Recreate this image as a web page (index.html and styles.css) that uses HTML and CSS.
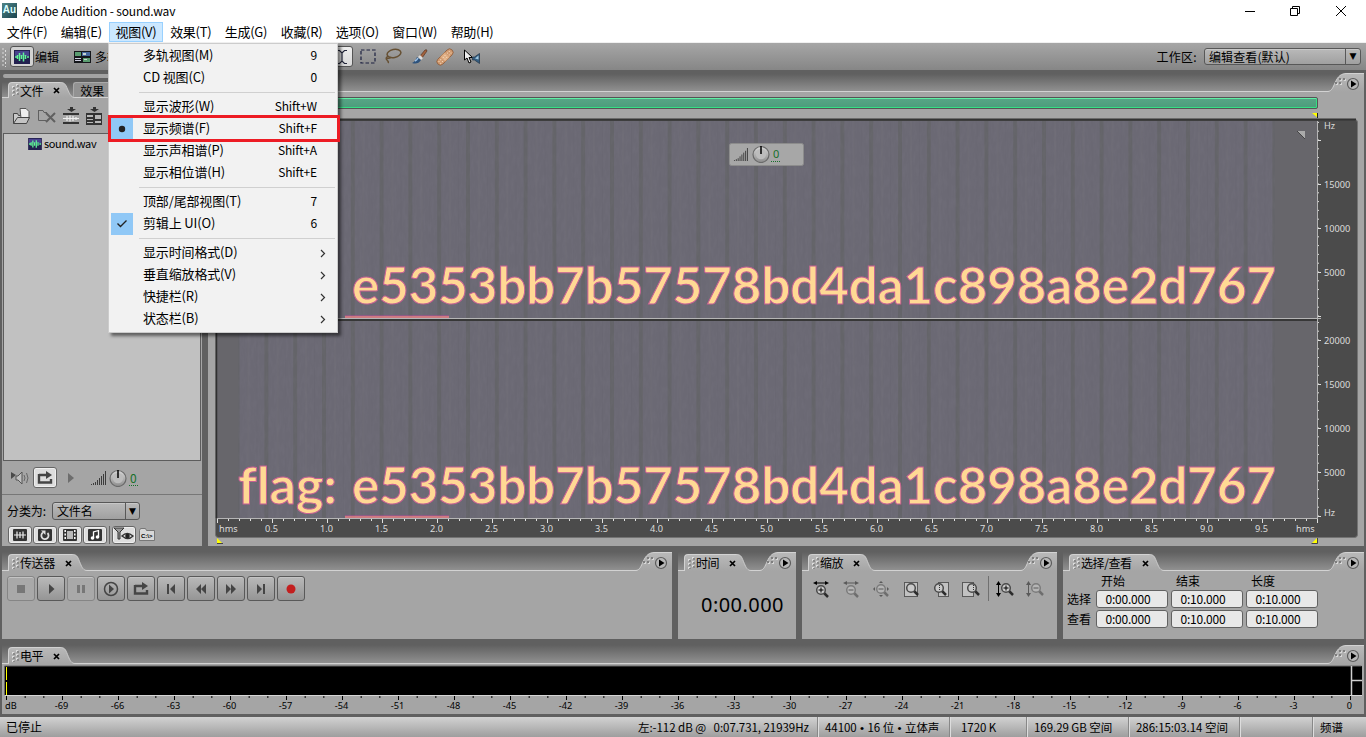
FILE: index.html
```html
<!DOCTYPE html>
<html lang="zh-CN">
<head>
<meta charset="utf-8">
<title>Adobe Audition - sound.wav</title>
<link rel="stylesheet" href="styles.css">
</head>
<body>
<svg class="defs" width="0" height="0">
  <defs>
    <linearGradient id="tabfill" x1="0" y1="0" x2="0" y2="1"><stop offset="0" stop-color="#b9b9b9"/><stop offset="1" stop-color="#a5a5a5"/></linearGradient>
    <linearGradient id="knobfill" x1="0" y1="0" x2="0" y2="1"><stop offset="0" stop-color="#d8d8d8"/><stop offset="1" stop-color="#8c8c8c"/></linearGradient>
    <symbol id="slope" viewBox="0 0 18 18" preserveAspectRatio="none"><path d="M0 0.5C7 .5 7 4 10 10C12 14.5 14 17.5 18 17.5V18H0Z" fill="url(#tabfill)"/><path d="M0 .5C7 .5 7 4 10 10C12 14.5 14 17.5 18 17.5" fill="none" stroke="#d2d2d2"/></symbol>
    <symbol id="corner" viewBox="0 0 36 19"><path d="M0 18.5C4 18 5 14 7 10C10 3 13 .5 19 .5H36V19H0Z" fill="url(#tabfill)"/><path d="M0 18.5C4 18 5 14 7 10C10 3 13 .5 19 .5H36" fill="none" stroke="#d2d2d2"/>
      <path d="M8 10h2v2H8zM12 10h2v2h-2zM12 6h2v2h-2zM16 6h2v2h-2z" fill="#d8d8d8"/><path d="M7 9h2v2H7zM11 9h2v2h-2zM11 5h2v2h-2zM15 5h2v2h-2z" fill="#7e7e7e"/>
      <circle cx="25" cy="11" r="5.500" fill="#b8b8b8" stroke="#5c5c5c" stroke-width="1.200"/><path d="M23 7.500v7l5.500-3.500z" fill="#000"/></symbol>
    <symbol id="grip" viewBox="0 0 9 13"><path d="M1 2h2v2H1zM1 6h2v2H1zM1 10h2v2H1zM5 4h2v2H5zM5 8h2v2H5zM5 0h2v2H5z" fill="#dcdcdc"/><path d="M2 3h2v2H2zM2 7h2v2H2zM2 11h2v1H2zM6 5h2v2H6zM6 9h2v2H6zM6 1h2v2H6z" fill="#8a8a8a"/></symbol>
    <symbol id="close" viewBox="0 0 7 7"><path d="M1 1l5 5M6 1L1 6" stroke="#000" stroke-width="1.700"/></symbol>
    <symbol id="wave" viewBox="0 0 16 14"><rect width="16" height="14" fill="#22204f"/><rect x="1" y="1" width="14" height="5" fill="#49428e"/><path d="M1 7h2M3.500 5v4M5.500 3v8M7.500 5v4M9.500 2.500v9M11.500 5v4M13 7h2" stroke="#61f29a" stroke-width="1.500"/></symbol>
    <symbol id="multi" viewBox="0 0 17 12"><rect width="17" height="12" fill="#14161a"/><path d="M1 1h6v4H1zM9 7h7v4H9z" fill="#5a9c70"/><path d="M8 1h8v4H8z" fill="#46679c"/><path d="M1 7h6v1H1zM1 9h6v1H1z" fill="#ccd"/><path d="M9 2h3v2H9zM10 8h3v1h-3z" fill="#c8d4d0"/></symbol>
    <symbol id="knob" viewBox="0 0 18 18"><circle cx="9" cy="9.500" r="8" fill="url(#knobfill)" stroke="#6a6a6a" stroke-width="1.200"/><circle cx="9" cy="9" r="5.200" fill="#bcbcbc"/><path d="M9 1v8" stroke="#000" stroke-width="1.500"/></symbol>
    <symbol id="bars" viewBox="0 0 16 14"><path d="M1.500 13v1M3.500 12v2M5.500 11v3M7.500 9v5M9.500 7v7M11.500 5v9M13.500 3v11M15.500 0v14" stroke="#3c3c3c"/></symbol>
    <symbol id="loop" viewBox="0 0 16 14"><path d="M2 3v8.500h12V8M2 4h8" fill="none" stroke="#454545" stroke-width="2.400"/><path d="M9 0v8l6-4z" fill="#454545"/></symbol>
    <symbol id="lens" viewBox="0 0 14 14"><path d="M8.500 8.500l4.500 4.500" stroke="#2c2c2c" stroke-width="2.500"/><circle cx="6" cy="6" r="4.300" fill="#c9c9c9" stroke="#4a4a4a" stroke-width="1.500"/></symbol>
    <symbol id="harrow" viewBox="0 0 16 5" preserveAspectRatio="none"><path d="M0 2.500L4 0v2h8V0l4 2.500L12 5V3H4v2z"/></symbol>
    <symbol id="varrow" viewBox="0 0 5 16" preserveAspectRatio="none"><path d="M2.500 0L5 4H3v8h2l-2.500 4L0 12h2V4H0z"/></symbol>
  </defs>
</svg>

<div class="app">
  <header class="titlebar">
    <span class="logo">Au</span>
    <span class="title">Adobe Audition - sound.wav</span>
    <svg class="wincontrols" width="106" height="20" fill="none" stroke="#000"><path d="M0 10.500h10"/><path d="M45.500 7.500h7v7h-7zM47.500 7V5.500h7v7H53"/><path d="M91 5l10 10M101 5L91 15"/></svg>
  </header>
  <nav class="menubar">
    <span>文件(F)</span><span>编辑(E)</span><span class="active">视图(V)</span><span>效果(T)</span><span>生成(G)</span><span>收藏(R)</span><span>选项(O)</span><span>窗口(W)</span><span>帮助(H)</span>
  </nav>

  <div class="toolbar">
    <svg width="5" height="20"><path d="M1 1v18M3.500 3v18" stroke="#dadada" stroke-dasharray="2 2"/></svg>
    <span class="modebtn"><svg width="16" height="14"><use href="#wave"/></svg></span>
    <span class="modetext">编辑</span>
    <svg class="multi" width="17" height="12"><use href="#multi"/></svg>
    <span class="modetext">多轨</span>
    <div class="tools">
      <span class="toolbtn"><svg width="12" height="16" fill="none" stroke="#22263a" stroke-width="1.200"><path d="M1 1.500h2.500L6 4l2.500-2.500H11M6 4v8M1 14.500h2.500L6 12l2.500 2.500H11"/></svg></span>
      <svg width="16" height="15"><rect x="1" y="1" width="14" height="13" fill="none" stroke="#1c2040" stroke-width="1.200" stroke-dasharray="3.500 2"/></svg>
      <svg width="18" height="17" fill="none" stroke="#665033" stroke-width="1.500"><ellipse cx="10" cy="5.500" rx="7" ry="4" transform="rotate(-12 10 5.500)"/><path d="M4 8q-3 2-1 4t1 3M3 10q3 1 4-1"/></svg>
      <svg width="17" height="16"><path d="M9 7l5-6q2-1 2 1l-5 7z" fill="#a3623d" stroke="#4a2818" stroke-width=".6"/><path d="M7 8l3 3 2-2-3-3z" fill="#ddd"/><path d="M1 14q3-1 5-6l4 3q-3 5-9 3z" fill="#2d527c"/><path d="M4 12q2-1 3-3" stroke="#9dc2e8" stroke-width="1.500"/></svg>
      <svg width="18" height="18"><g transform="rotate(-45 9 9)"><rect x="-1" y="5.500" width="20" height="7" rx="3.500" fill="#d09a70" stroke="#8b5c3c" stroke-width=".8"/><rect x="6" y="5.500" width="6" height="7" fill="#dfae84"/><path d="M1 8h4M1 10.500h4M13 8h4M13 10.500h4M7 8h4M7 10.500h4" stroke="#fbe3c7" stroke-dasharray="1 1.500"/></g></svg>
      <svg width="18" height="16"><path d="M1.500 1v10l2.500-2 2 5 2-1-2-4.500h3.500z" fill="#eee" stroke="#000"/><path d="M9.500 8h2l5-3.500v10L11.500 11h-2z" fill="#355d80" stroke="#203448" stroke-width=".7"/><path d="M12 9.500l3.500-3v4z" fill="#9dc6df"/></svg>
    </div>
    <span class="wslabel">工作区:</span>
    <span class="combo wscombo"><span>编辑查看(默认)</span><i>▼</i></span>
  </div>

  <main class="workspace">
    <section class="files">
      <div class="dockbar"></div>
      <div class="head filehead">
        <div class="tab"><svg width="9" height="13"><use href="#grip"/></svg><span>文件</span><svg class="x" width="7" height="7"><use href="#close"/></svg></div><svg class="slope" width="15" height="16"><use href="#slope"/></svg><div class="idletab">效果</div>
      </div>
      <div class="fileicons">
        <svg width="20" height="18"><path d="M1.500 16.500v-10h4l1 2h8v3" fill="#c9c9c9" stroke="#444"/><path d="M8 1.500h6l3 3v7H9z" fill="#eee" stroke="#555"/><path d="M1.500 16.500l4-6h12l-3 6z" fill="#c4c4c4" stroke="#444"/></svg>
        <svg width="20" height="18" fill="none" stroke="#606060"><path d="M1.500 3v10.500H9M1.500 3.500H6l1 2h3"/><path d="M9 6l9 9M18 6l-9 9" stroke-width="2"/></svg>
        <svg width="18" height="18"><path d="M8 0h3v2h3L9.500 5 5 2h3zM1 6h16v2H1zM1 15h16v2H1z" fill="#333"/><path d="M1 11.500h16M5 9v5M8 8.500v6M11 9v5M14 10v3" stroke="#eee" stroke-width="1.200"/></svg>
        <svg width="18" height="18"><path d="M8 0h3v2h3L9.500 5 5 2h3zM1 6h16v12H1z" fill="#333"/><path d="M2 8h6v2H2zM10 8h6v4h-6zM2 12h6v1H2zM2 15h6v1H2zM10 14h6v2h-6z" fill="#b8b8b8"/></svg>
      </div>
      <div class="filelist"><svg width="14" height="12"><use href="#wave" width="14" height="12"/></svg><span>sound.wav</span></div>
      <div class="playrow">
        <svg width="18" height="14"><path d="M0 1l5 3-5 4z" fill="#4a4a4a"/><path d="M5 5h2l4-4v12L7 9H5z" fill="#c0c0c0" stroke="#555"/><path d="M13 4q2 3 0 6M15.500 2q3 5 0 10" fill="none" stroke="#666"/></svg>
        <span class="lightbtn loopbtn"><svg width="16" height="14"><use href="#loop"/></svg></span>
        <svg class="mini" width="6" height="10"><path d="M0 0v10l6-5z" fill="#6d6d6d"/></svg>
        <svg class="vol" width="16" height="14"><use href="#bars"/></svg>
        <svg class="dial" width="18" height="18"><use href="#knob"/></svg>
        <span class="zero">0</span>
      </div>
      <div class="sortrow"><span>分类为:</span><span class="combo sortcombo"><span>文件名</span><i>▼</i></span></div>
      <div class="filterrow">
        <span class="lightbtn"><svg width="16" height="14"><rect x="1" y="1" width="14" height="12" rx="1" fill="#333"/><path d="M2 7h12M5 3.500v7M8 4v6M11 3.500v7" stroke="#eee" stroke-width="1.200"/></svg></span>
        <span class="lightbtn"><svg width="14" height="14"><rect y="1" width="14" height="12" rx="1" fill="#333"/><path d="M5 4.500a3.600 3.600 0 1 0 4.500.5" fill="none" stroke="#ddd" stroke-width="1.800"/><path d="M3 2.500h4.500V7z" fill="#ddd"/></svg></span>
        <span class="lightbtn"><svg width="14" height="14"><rect y="1" width="14" height="12" rx="1" fill="#333"/><rect x="4" y="3" width="6" height="8" fill="#b8b8b8"/><path d="M2.200 2v10M11.800 2v10" stroke="#fff" stroke-width="1.500" stroke-dasharray="2 1.500"/></svg></span>
        <span class="lightbtn"><svg width="14" height="14"><rect y="1" width="14" height="12" rx="1" fill="#333"/><path d="M5.500 10V4l5-1.500V9" fill="none" stroke="#fff" stroke-width="1.300"/><circle cx="4.500" cy="10" r="1.800" fill="#fff"/><circle cx="9.500" cy="9" r="1.800" fill="#fff"/></svg></span>
        <span class="vsep"></span>
        <span class="lightbtn"><svg width="20" height="16"><path d="M0 1h10L6 5v7H4V5z" fill="#999" stroke="#333"/><path d="M8 9q5-5 11 0-5 5-11 0z" fill="#ddd" stroke="#333" stroke-width="1.400"/><circle cx="13.500" cy="9" r="2.300" fill="#222"/></svg></span>
        <svg class="pathicon" width="17" height="14"><path d="M.5 12.500v-10l1-2h5l1 2h8v10z" fill="#d8d8d8" stroke="#777"/><text x="2" y="9.500">C:\&gt;</text></svg>
      </div>
    </section>

    <section class="editor">
      <div class="head edhead"><span class="fill"></span><svg class="corner" width="36" height="19"><use href="#corner"/></svg></div>
      <div class="rangebar"><i></i></div>
      <svg class="spectrum" width="1144" height="434" viewBox="215 112 1144 434">
        <defs>
          <pattern id="bands" x="322" y="0" width="28.800" height="300" patternUnits="userSpaceOnUse"><rect width="28.800" height="300" fill="#6b6974"/><rect x="0" width="4" height="300" fill="#646469"/><rect x="12" width="2" height="300" fill="#6d6b75"/><rect x="21" width="1" height="300" fill="#686672"/></pattern>
          <filter id="grain" x="0" y="0" width="100%" height="100%"><feTurbulence type="fractalNoise" baseFrequency=".35 .09" numOctaves="2" seed="4"/><feColorMatrix values="0 0 0 0 .46  0 0 0 0 .43  0 0 0 0 .53  .8 0 0 0 -.3"/></filter>
          <g id="channel">
            <rect x="217" width="1100" height="197" fill="#67666b"/><rect x="238" width="1037" height="197" fill="url(#bands)"/><rect x="238" width="1037" height="197" filter="url(#grain)" opacity=".12"/>
            <path d="M345 194.500h104" stroke="#b34d99" opacity=".5"/><path d="M345 196h104" stroke="#f08088" stroke-width="1.500"/>
          </g>
        </defs>
        <rect x="215.500" y="119.500" width="1142" height="418" rx="3" fill="#4b4b4b" stroke="#737373"/>
        <path d="M216 119.500h1140" stroke="#333" stroke-width="2"/>
        <use href="#channel" y="121"/><use href="#channel" y="321"/>
        <path d="M217 318.500h1104" stroke="#b5b5b5"/><path d="M217 320h1101" stroke="#303030" stroke-width="1.500"/>
        <path d="M216.500 120v398" stroke="#303030" stroke-width="1.500"/>
        <path d="M217 518.500h1101M1317.500 121v397" stroke="#b5b5b5"/>
        <g class="flag"><text x="352" y="303.500" textLength="924" lengthAdjust="spacingAndGlyphs">e5353bb7b57578bd4da1c898a8e2d767</text><text x="238" y="503.500" textLength="99" lengthAdjust="spacingAndGlyphs">flag:</text><text x="352" y="503.500" textLength="924" lengthAdjust="spacingAndGlyphs">e5353bb7b57578bd4da1c898a8e2d767</text></g>
        <g stroke="#e0e0e0"><path d="M217 520h1101" stroke-width="2" stroke-dasharray="1 10"/><path d="M217 521h1101" stroke-width="4" stroke-dasharray="1 54"/>
        <path d="M1318.500 316.500V121" stroke-dasharray="1 7.800"/><path d="M1319.500 317V121" stroke-width="3" stroke-dasharray="1 43"/><path d="M1318.500 516.500V322" stroke-dasharray="1 7.800"/><path d="M1319.500 517V322" stroke-width="3" stroke-dasharray="1 43"/></g>
        <g class="ruler">
          <text x="219" y="532">hms</text>
          <g text-anchor="middle"><text x="271.500" y="532">0.5</text><text x="326.500" y="532">1.0</text><text x="381.500" y="532">1.5</text><text x="436.500" y="532">2.0</text><text x="491.500" y="532">2.5</text><text x="546.500" y="532">3.0</text><text x="601.500" y="532">3.5</text><text x="656.500" y="532">4.0</text><text x="711.500" y="532">4.5</text><text x="766.500" y="532">5.0</text><text x="821.500" y="532">5.5</text><text x="876.500" y="532">6.0</text><text x="931.500" y="532">6.5</text><text x="986.500" y="532">7.0</text><text x="1041.500" y="532">7.5</text><text x="1096.500" y="532">8.0</text><text x="1151.500" y="532">8.5</text><text x="1206.500" y="532">9.0</text><text x="1261.500" y="532">9.5</text></g>
          <text x="1296" y="532">hms</text>
          <text x="1324" y="129">Hz</text><text x="1324" y="188">15000</text><text x="1324" y="232">10000</text><text x="1324" y="276">5000</text>
          <text x="1324" y="344">20000</text><text x="1324" y="388">15000</text><text x="1324" y="432">10000</text><text x="1324" y="476">5000</text><text x="1324" y="516">Hz</text>
        </g>
        <path d="M1312 113h6v5z" fill="#ff0"/><path d="M1317.500 113v5" stroke="#222"/>
        <path d="M217 538v5h5z" fill="#ff0"/><path d="M217 543.500h6" stroke="#444"/><path d="M1317 538v5h-5z" fill="#ff0"/><path d="M1317.500 538v5.500h-6" fill="none" stroke="#444"/>
        <path d="M1297 131h8v8z" fill="#aaa"/><path d="M1297 131l8 8" stroke="#444"/>
        <rect x="729.500" y="143.500" width="74" height="22" rx="2" fill="#a7a7a7" stroke="#8c8c8c"/>
        <use href="#bars" x="733" y="148" width="15" height="13"/><use href="#knob" x="752" y="145" width="18" height="18"/>
        <text class="gain" x="773" y="158">0</text><path d="M771 161.500h9" stroke="#17702a" stroke-dasharray="1 1"/>
      </svg>
    </section>
  </main>

  <div class="lower">
    <section class="panel transport">
      <div class="head"><div class="tab"><svg width="9" height="13"><use href="#grip"/></svg><span>传送器</span><svg class="x" width="7" height="7"><use href="#close"/></svg></div><svg class="slope" width="15" height="17"><use href="#slope"/></svg><span class="fill"></span><svg class="corner" width="36" height="19"><use href="#corner"/></svg></div>
      <div class="buttons">
        <span class="off"><svg width="20" height="16"><path d="M6 4h8v8H6z"/></svg></span>
        <span><svg width="20" height="16"><path d="M8 3v10l5.500-5z"/></svg></span>
        <span class="off"><svg width="20" height="16"><path d="M6 4h3v8H6zM11 4h3v8h-3z"/></svg></span>
        <span><svg width="20" height="16"><circle cx="10" cy="8" r="6.500" fill="none" stroke="#454545" stroke-width="1.500"/><path d="M8 3.500v9l5-4.500z"/></svg></span>
        <span><svg width="16" height="14"><use href="#loop"/></svg></span>
        <span><svg width="20" height="16"><path d="M6 3h2v10H6zM14 3v10L9 8z"/></svg></span>
        <span><svg width="20" height="16"><path d="M10 3v10L5 8zM15 3v10l-5-5z"/></svg></span>
        <span><svg width="20" height="16"><path d="M5 3v10l5-5zM10 3v10l5-5z"/></svg></span>
        <span><svg width="20" height="16"><path d="M6 3v10l5-5zM12 3h2v10h-2z"/></svg></span>
        <span><svg width="20" height="16"><circle cx="10" cy="8" r="4.500" fill="#c31f1f"/></svg></span>
      </div>
    </section>
    <section class="panel time">
      <div class="head"><div class="tab"><svg width="9" height="13"><use href="#grip"/></svg><span>时间</span><svg class="x" width="7" height="7"><use href="#close"/></svg></div><svg class="slope" width="15" height="17"><use href="#slope"/></svg><span class="fill"></span><svg class="corner" width="36" height="19"><use href="#corner"/></svg></div>
      <div class="clock">0:00.000</div>
    </section>
    <section class="panel zoom">
      <div class="head"><div class="tab"><svg width="9" height="13"><use href="#grip"/></svg><span>缩放</span><svg class="x" width="7" height="7"><use href="#close"/></svg></div><svg class="slope" width="15" height="17"><use href="#slope"/></svg><span class="fill"></span><svg class="corner" width="36" height="19"><use href="#corner"/></svg></div>
      <div class="zooms">
        <svg width="18" height="18"><use href="#harrow" x="1" y="0" width="16" height="4"/><use href="#lens" x="3" y="3" width="14" height="14"/><path d="M6.500 9h5M9 6.500v5" stroke="#000"/></svg>
        <svg class="dim" width="18" height="18"><use href="#harrow" x="1" y="0" width="16" height="4"/><use href="#lens" x="3" y="3" width="14" height="14"/><path d="M6.500 9h5" stroke="#000"/></svg>
        <svg class="dim" width="18" height="18"><path d="M9 0l2 2H7zM9 16l2-2H7zM1 8l2-2v4zM17 8l-2-2v4z"/><use href="#lens" x="3" y="2" width="14" height="14"/><path d="M6.500 8h5" stroke="#000"/></svg>
        <svg width="18" height="18"><rect x="2.500" y="1.500" width="13" height="14" fill="#c2c2c2" stroke="#000" stroke-dasharray="1 1"/><use href="#lens" x="3" y="1" width="14" height="14"/></svg>
        <svg width="18" height="18"><rect x="6.500" y="1.500" width="10" height="14" fill="#c2c2c2" stroke="#000" stroke-dasharray="1 1"/><use href="#lens" x="1" y="1" width="14" height="14"/><path d="M7.500 4v6" stroke="#333" stroke-dasharray="1 1"/></svg>
        <svg width="18" height="18"><rect x=".5" y="1.500" width="11" height="14" fill="#c2c2c2" stroke="#000" stroke-dasharray="1 1"/><use href="#lens" x="4" y="1" width="14" height="14"/><path d="M11.500 4v6" stroke="#333" stroke-dasharray="1 1"/></svg>
        <i></i>
        <svg width="18" height="18"><use href="#varrow" x="0" y="0" width="5" height="16"/><use href="#lens" x="4" y="1" width="14" height="14"/><path d="M7.500 7h5M10 4.500v5" stroke="#000"/></svg>
        <svg class="dim" width="18" height="18"><use href="#varrow" x="0" y="0" width="5" height="16"/><use href="#lens" x="4" y="1" width="14" height="14"/><path d="M7.500 7h5" stroke="#000"/></svg>
      </div>
    </section>
    <section class="panel select">
      <div class="head"><div class="tab"><svg width="9" height="13"><use href="#grip"/></svg><span>选择/查看</span><svg class="x" width="7" height="7"><use href="#close"/></svg></div><svg class="slope" width="15" height="17"><use href="#slope"/></svg><span class="fill"></span><svg class="corner" width="36" height="19"><use href="#corner"/></svg></div>
      <div class="fields">
        <span></span><span class="th">开始</span><span class="th">结束</span><span class="th">长度</span>
        <span>选择</span><b>0:00.000</b><b>0:10.000</b><b>0:10.000</b>
        <span>查看</span><b>0:00.000</b><b>0:10.000</b><b>0:10.000</b>
      </div>
    </section>
  </div>

  <section class="panel levels">
    <div class="head"><div class="tab"><svg width="9" height="13"><use href="#grip"/></svg><span>电平</span><svg class="x" width="7" height="7"><use href="#close"/></svg></div><svg class="slope" width="15" height="17"><use href="#slope"/></svg><span class="fill"></span><svg class="corner" width="36" height="19"><use href="#corner"/></svg></div>
    <svg class="meter" width="1362" height="50" viewBox="2 664 1362 50">
      <rect x="4" y="666" width="1358" height="29" fill="#000"/><path d="M4.500 695v-29h1357" fill="none" stroke="#666"/><path d="M5 695.500h1357" stroke="#d6d6d6"/>
      <path d="M6.500 667v13M6.500 682v13" stroke="#ff0"/><path d="M1351.500 666v29M1352 680.500h10" stroke="#d0d0d0" stroke-width="1.500"/>
      <path d="M6 697h1345" stroke="#000" stroke-width="2" stroke-dasharray="1 17.667"/><path d="M6 698h1345" stroke="#000" stroke-width="4" stroke-dasharray="1 55"/>
      <g class="db"><text x="5" y="709">dB</text><g text-anchor="middle"><text x="61.500" y="709">-69</text><text x="117.500" y="709">-66</text><text x="173.500" y="709">-63</text><text x="229.500" y="709">-60</text><text x="285.500" y="709">-57</text><text x="341.500" y="709">-54</text><text x="397.500" y="709">-51</text><text x="453.500" y="709">-48</text><text x="509.500" y="709">-45</text><text x="565.500" y="709">-42</text><text x="621.500" y="709">-39</text><text x="677.500" y="709">-36</text><text x="733.500" y="709">-33</text><text x="789.500" y="709">-30</text><text x="845.500" y="709">-27</text><text x="901.500" y="709">-24</text><text x="957.500" y="709">-21</text><text x="1013.500" y="709">-18</text><text x="1069.500" y="709">-15</text><text x="1125.500" y="709">-12</text><text x="1181.500" y="709">-9</text><text x="1237.500" y="709">-6</text><text x="1293.500" y="709">-3</text><text x="1349.500" y="709">0</text></g></g>
    </svg>
  </section>

  <footer class="status">
    <span class="stopped">已停止</span><span class="s1">左:-112 dB @ &nbsp; 0:07.731, 21939Hz</span><span class="s2">44100 <u>•</u> 16 位 <u>•</u> 立体声</span><span class="s3">1720 K</span><span class="s4">169.29 GB 空间</span><span class="s5">286:15:03.14 空间</span><span class="s6"></span><span class="s7">频谱</span>
  </footer>

  <div class="dropdown">
    <div class="row"><span>多轨视图(M)</span><em>9</em></div>
    <div class="row"><span>CD 视图(C)</span><em>0</em></div>
    <hr>
    <div class="row"><span>显示波形(W)</span><em>Shift+W</em></div>
    <div class="row"><i class="mark"><svg width="22" height="22"><circle cx="11" cy="11" r="3.200" fill="#222"/></svg></i><span>显示频谱(F)</span><em>Shift+F</em></div>
    <div class="row"><span>显示声相谱(P)</span><em>Shift+A</em></div>
    <div class="row"><span>显示相位谱(H)</span><em>Shift+E</em></div>
    <hr>
    <div class="row"><span>顶部/尾部视图(T)</span><em>7</em></div>
    <div class="row"><i class="mark"><svg width="22" height="22"><path d="M6.500 10.500l3 3 6-6" fill="none" stroke="#222" stroke-width="1.400"/></svg></i><span>剪辑上 UI(O)</span><em>6</em></div>
    <hr>
    <div class="row"><span>显示时间格式(D)</span><svg class="arrow" width="6" height="9"><path d="M1 1l3.500 3.500L1 8"/></svg></div>
    <div class="row"><span>垂直缩放格式(V)</span><svg class="arrow" width="6" height="9"><path d="M1 1l3.500 3.500L1 8"/></svg></div>
    <div class="row"><span>快捷栏(R)</span><svg class="arrow" width="6" height="9"><path d="M1 1l3.500 3.500L1 8"/></svg></div>
    <div class="row"><span>状态栏(B)</span><svg class="arrow" width="6" height="9"><path d="M1 1l3.500 3.500L1 8"/></svg></div>
    <div class="redbox"></div>
  </div>
</div>
</body>
</html>
```
FILE: styles.css
```css
* { box-sizing: border-box; }
body { margin: 0; overflow: hidden; color: #000; font: 12px/16px "Noto Sans CJK SC", sans-serif; }
svg { display: block; flex: none; }
i, em { font-style: normal; }
.defs { position: absolute; }
.app { position: relative; width: 1366px; height: 737px; display: flex; flex-direction: column; background: #606060; white-space: nowrap; }

.titlebar { height: 22px; background: #fff; display: flex; align-items: center; padding-left: 2px; }
.logo { width: 15px; height: 15px; margin-top: -1px; background: linear-gradient(135deg, #4f8588, #19434d); color: #dff; font: bold 10px/14px "Liberation Sans", sans-serif; text-align: center; }
.title { margin-left: 6px; font-size: 12px; line-height: 20px; letter-spacing: -.16px; }
.wincontrols { margin-left: auto; margin-right: 15px; }
.menubar { height: 21px; background: #fff; display: flex; border-bottom: 1px solid #f0f0f0; font-size: 13px; letter-spacing: -.3px; }
.menubar span { height: 20px; line-height: 18px; padding: 0 6.800px; border: 1px solid transparent; border-width: 1px 0; }
.menubar .active { background: #cce8ff; border: 1px solid #99d1ff; padding: 0 6px; }

.toolbar { height: 27px; display: flex; align-items: center; background: linear-gradient(#a6a6a6, #868686); padding: 0 5px 0 2px; }
.modebtn { width: 24px; height: 21px; margin-left: 3px; display: grid; place-items: center; border: 1px solid #555; border-radius: 3px; background: #d2d2d2; }
.modetext { margin-left: 1px; font-size: 12px; }
.multi { margin: 0 3px 0 15px; }
.tools { margin-left: 212px; display: flex; align-items: center; gap: 8.500px; }
.toolbtn { width: 22px; height: 21px; margin-right: -2px; display: grid; place-items: center; border: 1px solid #555; border-radius: 3px; background: linear-gradient(#eee, #d8d8d8); }
.wslabel { margin-left: auto; margin-right: 7px; letter-spacing: .3px; }
.combo { display: flex; border: 1px solid #585858; border-radius: 3px; background: linear-gradient(#b9b9b9, #a0a0a0); box-shadow: inset 0 1px #c8c8c8; }
.combo span { flex: 1; padding-left: 4px; }
.combo i { border-left: 1px solid #585858; font: 9px/14px "DejaVu Sans", sans-serif; text-align: center; }
.wscombo { width: 157px; height: 17px; line-height: 15px; letter-spacing: .1px; }
.wscombo i { width: 15px; }

.workspace { height: 476px; padding: 4px 2px 0; display: flex; gap: 6px; }
.files { width: 200px; display: flex; flex-direction: column; background: #a5a5a5; }
.dockbar { height: 8px; background: #606060; }
.dockbar::before { content: ""; display: block; height: 4px; margin-left: 1px; border-radius: 3px; background: #a2a2a2; }

.head { height: 19px; flex: none; display: flex; align-items: flex-end; background: linear-gradient(#606060, #909090); padding-left: 6px; border-bottom: 1px solid #d2d2d2; }
.tab { height: 17px; margin-bottom: -1px; display: flex; align-items: center; border: 1px solid #d2d2d2; border-width: 1px 0 0 1px; border-radius: 4px 0 0; background: linear-gradient(#b9b9b9, #a5a5a5); padding-left: 2px; line-height: 16px; letter-spacing: -.4px; }
.tab .x { margin-left: 10px; }
.slope { margin-bottom: -1px; }
.corner { margin-bottom: -1px; }
.fill { flex: 1; }
.filehead { height: 16px; }
.filehead .tab { height: 16px; }
.idletab { flex: 1; height: 15px; background: #929292; border-top: 1px solid #aaa; border-left: 1px solid #aaa; margin-left: -2px; padding-left: 6px; line-height: 15px; border-radius: 3px 0 0; }

.fileicons { height: 35px; padding: 9px 0 0 10px; display: flex; gap: 5px; }
.filelist { height: 328px; flex: none; margin: 0 1px; border: 1px solid #5d5d5d; background: #c1c1c1; padding: 4px 0 0 24px; display: flex; gap: 2px; line-height: 12px; }
.filelist span { font-size: 11px; line-height: 10px; letter-spacing: -.35px; }
.playrow { height: 34px; display: flex; align-items: center; padding-left: 9px; border-bottom: 1px solid #777; }
.lightbtn { display: grid; place-items: center; width: 24px; height: 18px; border: 1px solid #666; border-radius: 3px; background: #dedede; box-shadow: inset 0 0 0 1px #efefef; }
.loopbtn { height: 21px; margin-left: 4px; }
.mini { margin-left: 11px; }
.vol { margin-left: 16px; }
.dial { margin-left: 3px; }
.zero { color: #17702a; margin-left: 2px; padding: 0 1px; line-height: 15px; border-bottom: 1px dotted #17702a; }
.sortrow { height: 31px; display: flex; align-items: center; padding-left: 5px; gap: 6px; letter-spacing: -.1px; }
.sortcombo { width: 88px; height: 18px; line-height: 16px; }
.sortcombo i { width: 14px; line-height: 16px; }
.filterrow { display: flex; gap: 1px; padding-left: 6px; align-items: center; height: 17px; }
.filterrow .vsep { width: 1px; height: 18px; background: #666; margin: 0 1px; }
.pathicon { margin-left: 2px; }
.pathicon text { font: bold 6px "Liberation Sans", sans-serif; }

.editor { width: 1156px; background: #a5a5a5; display: flex; flex-direction: column; }
.edhead { height: 18px; }
.rangebar { height: 20px; padding: 5px 46px 0 9px; }
.rangebar i { display: block; height: 12px; border: 1px solid #545454; border-radius: 2px; background: linear-gradient(#58a586, #4b9c7b); box-shadow: inset 0 1px #5ff0a5, inset 0 -1px #35df84, inset -1px 0 #35df84; }
.spectrum { margin-left: 7px; }
.flag text { font: bold 52px Lato, sans-serif; font-variant-ligatures: none; fill: #ffd994; stroke: #c76093; stroke-width: 1px; }
.ruler text { font: 9.200px "Noto Sans", sans-serif; fill: #dcdcdc; }
.gain { font: 11px "Noto Sans", sans-serif; fill: #17702a; }

.lower { height: 93px; padding: 6px 2px 0; display: flex; gap: 6px; }
.panel { height: 87px; flex: none; background: #a5a5a5; }
.transport { width: 670px; }
.time { width: 118px; }
.zoom { width: 255px; }
.select { width: 301px; }
.buttons { display: flex; gap: 2px; padding: 5px 0 0 5px; }
.buttons span { width: 28px; height: 25px; display: grid; place-items: center; border: 1px solid #595959; border-radius: 3px; background: linear-gradient(#b9b9b9, #959595); box-shadow: inset 0 1px #c4c4c4; fill: #454545; }
.buttons .off { border-color: #858585; background: #a9a9a9; fill: #777; }
.clock { font: 20px/28px "Noto Sans", sans-serif; letter-spacing: .45px; padding: 20px 0 0 23px; }
.zooms { display: flex; gap: 12px; padding: 10px 0 0 10px; }
.zooms i { width: 1px; height: 25px; margin: -5px -5px 0 -4px; background: #707070; }
.dim { opacity: .45; }
.fields { display: grid; grid-template-columns: 26px 72px 72px 72px; gap: 2px 3px; grid-template-rows: 16px 18px 18px; padding: 1px 0 0 4px; line-height: 18px; }
.fields .th { padding-left: 5px; }
.fields b { font: 12px/16px "Noto Sans CJK SC", sans-serif; text-align: center; border: 1px solid #626262; border-radius: 3px; background: #e8e8e8; padding-right: 8px; letter-spacing: -.2px; }

.levels { width: 1362px; height: 69px; margin: 6px 0 0 2px; }
.db text { font: 9.200px "Noto Sans", sans-serif; }

.status { height: 20px; margin-top: 3px; background: linear-gradient(#d2d2d2, #9e9e9e); display: flex; font-size: 11.500px; letter-spacing: -.05px; line-height: 20px; }
.status u { font-family: "Liberation Sans", sans-serif; text-decoration: none; margin: 0 .9px; }
.status span { border-left: 1px solid #ddd; box-shadow: -1px 0 #888; padding-left: 6px; }
.status .stopped, .status .s1 { border: 0; box-shadow: none; }
.stopped { width: 632px; font-size: 12px; }
.s1 { width: 186px; }
.s2 { width: 132px; }
.status .s3 { width: 77px; padding-left: 10px; }
.s4 { width: 102px; }
.s5 { width: 111px; }
.s6 { width: 73px; }
.s7 { flex: 1; }

.dropdown { position: absolute; left: 108px; top: 43px; width: 230px; height: 290px; padding: 1px 2px; background: #f2f2f2; border: 1px solid #ccc; box-shadow: 3px 3px 3px rgba(0,0,0,.5); font-size: 13px; letter-spacing: -.15px; }
.row { height: 22px; display: flex; align-items: center; position: relative; padding: 0 18px 0 32px; line-height: 20px; }
.row > span, .row em { height: 22px; }
.row em { margin-left: auto; font-size: 12px; }
.mark { position: absolute; left: 0; top: 0; background: #90c8f6; }
.arrow { margin-left: auto; margin-right: -9px; fill: none; stroke: #333; stroke-width: 1.200; }
.dropdown hr { margin: 3px 0 3px 28px; border: 0; height: 1px; background: #d0d0d0; }
.redbox { position: absolute; left: -1px; top: 71px; width: 232px; height: 27px; border: 3px solid #ed1c24; }
```
